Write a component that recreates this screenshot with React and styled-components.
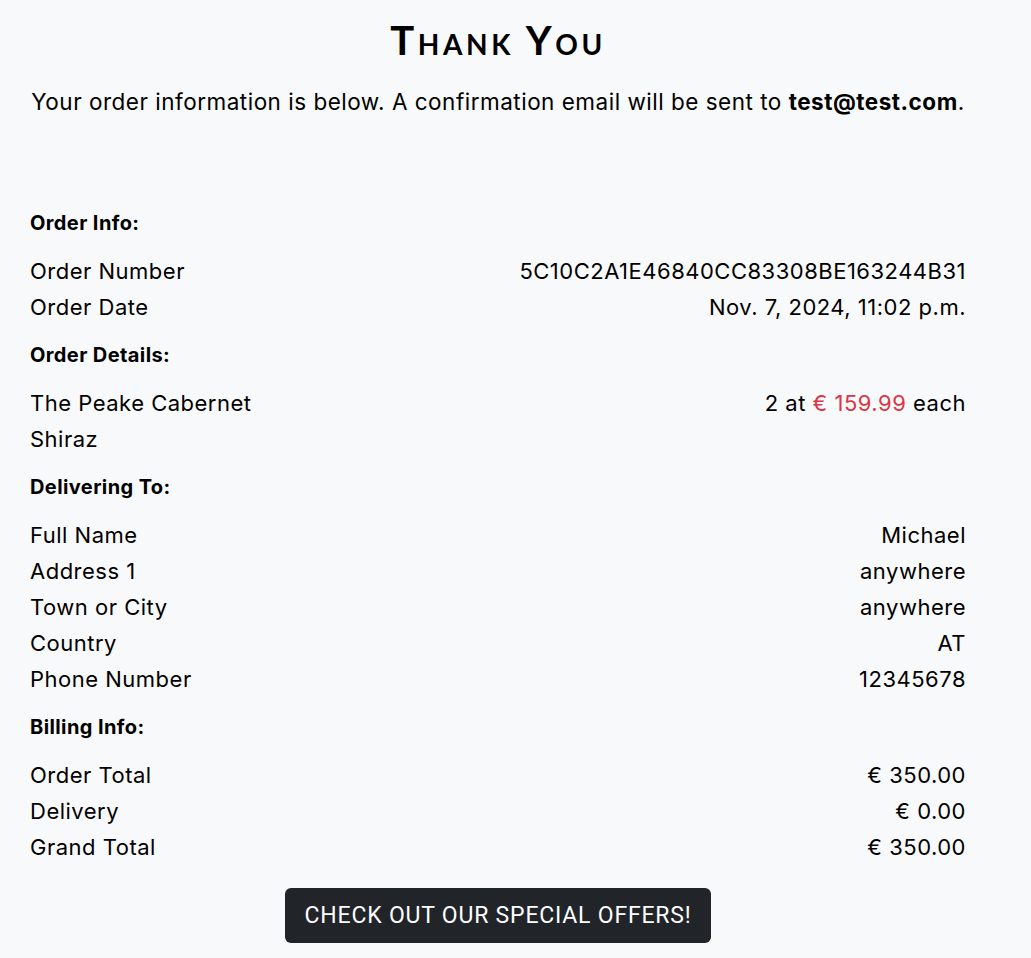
import React from 'react'
import styled, { createGlobalStyle } from 'styled-components'

const GlobalStyle = createGlobalStyle`
    html, body {
        margin: 0;
        padding: 0;
        background-color: #f8f9fa;
    }
    body {
        font-family: Inter, "Noto Sans", sans-serif;
        color: #000;
    }
`

export const Page = styled.div`
    width: 936px;
    padding: 0 65px 0 30px;
`

export const Title = styled.h1`
    font-family: Lato, "Noto Sans", sans-serif;
    font-variant: small-caps;
    font-weight: 700;
    font-size: 40px;
    line-height: 48px;
    text-align: center;
    margin: 16px 0 0;
    letter-spacing: 3.6px;
`

export const Lead = styled.p`
    font-size: 22.5px;
    letter-spacing: 0.5px;
    line-height: 32px;
    text-align: center;
    margin: 22px 0 0;

    strong {
        font-weight: 700;
    }
`

export const Sections = styled.div`
    margin-top: 93px;
`

export const SectionHeading = styled.h6`
    font-size: 20px;
    letter-spacing: 0.4px;
    font-weight: 700;
    line-height: 24px;
    margin: ${p => (p.first ? '0' : '18px')} 0 18px;
`

export const Row = styled.div`
    display: flex;
    justify-content: space-between;
    align-items: flex-start;
    font-size: 22px;
    letter-spacing: 0.5px;
    line-height: 36px;
`

export const Label = styled.div`
    width: ${p => p.narrow ? '260px' : 'auto'};
`

export const Value = styled.div`
    text-align: right;
`

export const Price = styled.span`
    color: #dc3545;
`

export const ButtonWrap = styled.div`
    display: flex;
    justify-content: center;
    margin-top: 23px;
    padding-bottom: 16px;
`

export const OffersButton = styled.a`
    display: inline-flex;
    align-items: center;
    justify-content: center;
    width: 426px;
    height: 55px;
    box-sizing: border-box;
    background-color: #212529;
    color: #fff;
    border-radius: 6px;
    font-family: Roboto, "Liberation Sans", sans-serif;
    font-size: 23px;
    letter-spacing: 0.8px;
    text-transform: uppercase;
    text-decoration: none;
`

const orderInfo = [
    ['Order Number', '5C10C2A1E46840CC83308BE163244B31'],
    ['Order Date', 'Nov. 7, 2024, 11:02 p.m.'],
]

const delivery = [
    ['Full Name', 'Michael'],
    ['Address 1', 'anywhere'],
    ['Town or City', 'anywhere'],
    ['Country', 'AT'],
    ['Phone Number', '12345678'],
]

const billing = [
    ['Order Total', '€ 350.00'],
    ['Delivery', '€ 0.00'],
    ['Grand Total', '€ 350.00'],
]

const Rows = ({ rows }) => rows.map(([label, value]) => (
    <Row key={label}>
        <Label>{label}</Label>
        <Value>{value}</Value>
    </Row>
))

const App = () => {
    return (
        <Page>
            <GlobalStyle />
            <Title>Thank You</Title>
            <Lead>
                Your order information is below. A confirmation email will be sent to <strong>test@test.com</strong>.
            </Lead>
            <Sections>
                <SectionHeading first>Order Info:</SectionHeading>
                <Rows rows={orderInfo} />

                <SectionHeading>Order Details:</SectionHeading>
                <Row>
                    <Label narrow>The Peake Cabernet Shiraz</Label>
                    <Value>2 at <Price>€ 159.99</Price> each</Value>
                </Row>

                <SectionHeading>Delivering To:</SectionHeading>
                <Rows rows={delivery} />

                <SectionHeading>Billing Info:</SectionHeading>
                <Rows rows={billing} />
            </Sections>
            <ButtonWrap>
                <OffersButton href="#">Check out our special offers!</OffersButton>
            </ButtonWrap>
        </Page>
    )
}

export default App
